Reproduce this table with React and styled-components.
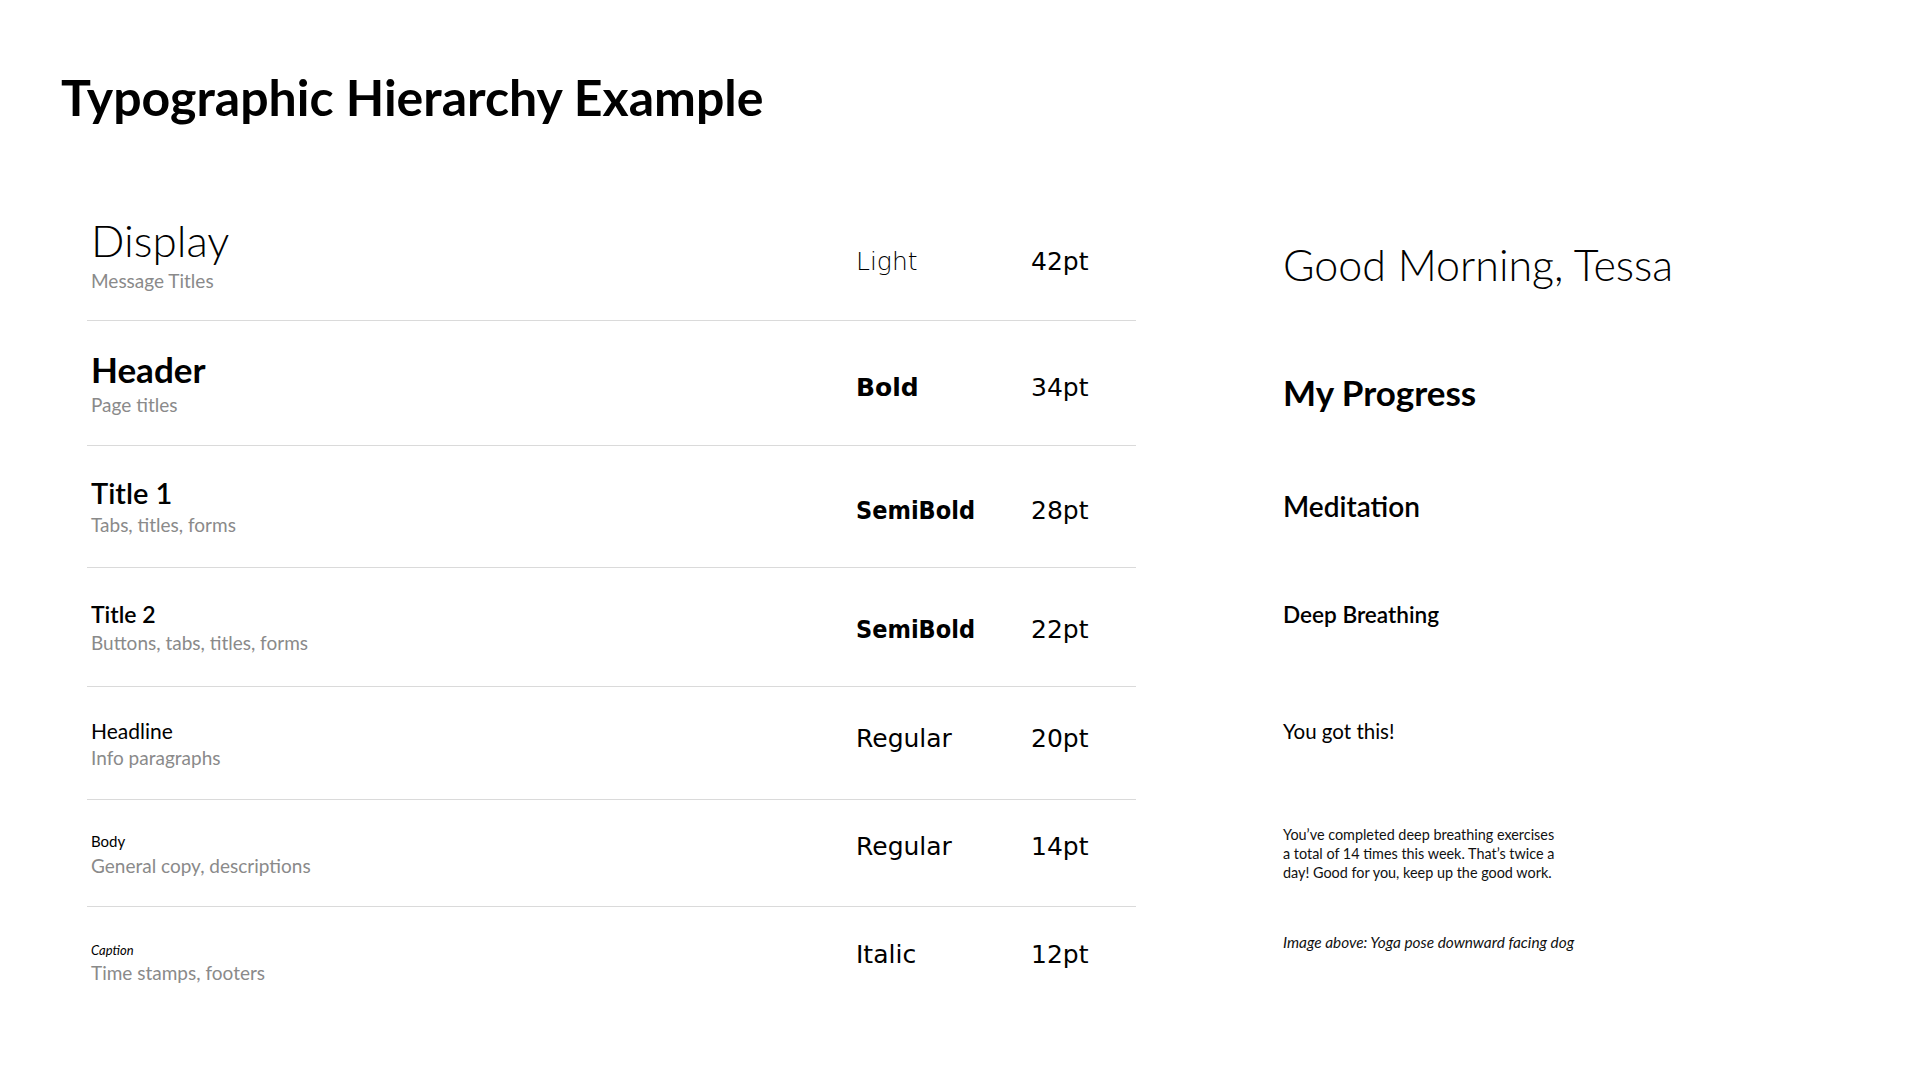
import React from "react";
import styled, { createGlobalStyle } from "styled-components";

// shiftName / shiftSpec: small vertical nudges (px) so each cell sits where the spec sheet puts it
const styles = [
  { name: "Display", use: "Message Titles", weight: "Light", size: "42pt", height: 121, nameSize: 44, nameWeight: 300, shiftName: -6, shiftSpec: 1 },
  { name: "Header", use: "Page titles", weight: "Bold", size: "34pt", height: 125, nameSize: 35, nameWeight: 700, shiftName: 0, shiftSpec: 4 },
  { name: "Title 1", use: "Tabs, titles, forms", weight: "SemiBold", size: "28pt", height: 122, nameSize: 29, nameWeight: 600, shiftName: 0, shiftSpec: 4 },
  { name: "Title 2", use: "Buttons, tabs, titles, forms", weight: "SemiBold", size: "22pt", height: 119, nameSize: 23, nameWeight: 600, shiftName: 1, shiftSpec: 2 },
  { name: "Headline", use: "Info paragraphs", weight: "Regular", size: "20pt", height: 113, nameSize: 21, nameWeight: 400, shiftName: 1, shiftSpec: -5 },
  { name: "Body", use: "General copy, descriptions", weight: "Regular", size: "14pt", height: 107, nameSize: 15, nameWeight: 400, shiftName: 2, shiftSpec: -7 },
  { name: "Caption", use: "Time stamps, footers", weight: "Italic", size: "12pt", height: 107, nameSize: 13, nameWeight: 400, italic: true, shiftName: 3, shiftSpec: -6 },
];

const weightMap = { Light: 200, Bold: 700, SemiBold: 700, Regular: 400, Italic: 400 };

const App = () => {
  return (
    <Page>
      <GlobalStyle />
      <PageTitle>Typographic Hierarchy Example</PageTitle>
      <Content>
        <Table>
          {styles.map((s, i) => (
            <Row key={s.name} $height={s.height} $last={i === styles.length - 1}>
              <NameCell $shift={s.shiftName}>
                <StyleName $size={s.nameSize} $weight={s.nameWeight} $italic={s.italic}>
                  {s.name}
                </StyleName>
                <StyleUse>{s.use}</StyleUse>
              </NameCell>
              <Weight
                $weight={weightMap[s.weight]}
                $narrow={s.weight === "SemiBold"}
                $shift={s.shiftSpec}
              >
                {s.weight}
              </Weight>
              <Size $shift={s.shiftSpec}>{s.size}</Size>
            </Row>
          ))}
        </Table>
        <Samples>
          <Slot $height={128}>
            <Greeting>Good Morning, Tessa</Greeting>
          </Slot>
          <Slot $height={128}>
            <PageHeader>My Progress</PageHeader>
          </Slot>
          <Slot $height={100}>
            <SectionTitle>Meditation</SectionTitle>
          </Slot>
          <Slot $height={116}>
            <ItemTitle>Deep Breathing</ItemTitle>
          </Slot>
          <Slot $height={118}>
            <Headline>You got this!</Headline>
          </Slot>
          <Slot $height={126}>
            <Paragraph>
              You’ve completed deep breathing exercises
              <br />
              a total of 14 times this week. That’s twice a
              <br />
              day! Good for you, keep up the good work.
            </Paragraph>
          </Slot>
          <Slot $height={52}>
            <Caption>Image above: Yoga pose downward facing dog</Caption>
          </Slot>
        </Samples>
      </Content>
    </Page>
  );
};

export default App;

const GlobalStyle = createGlobalStyle`
  html, body {
    margin: 0;
    padding: 0;
    background: #ffffff;
  }
  body {
    font-family: Lato, "Open Sans", sans-serif;
    color: #000000;
  }
`;

const Page = styled.div`
  width: 1920px;
  height: 1080px;
  box-sizing: border-box;
  padding: 63px 0 0 61px;
  background: #ffffff;
`;

const PageTitle = styled.h1`
  margin: 0;
  font-family: Lato, sans-serif;
  font-size: 50px;
  font-weight: 700;
  line-height: 68px;
  color: #000000;
`;

const Content = styled.div`
  display: flex;
  align-items: flex-start;
  gap: 147px;
  margin-top: 69px;
  padding-left: 26px;
`;

const Table = styled.div`
  width: 1049px;
  display: flex;
  flex-direction: column;
`;

const Row = styled.div`
  height: ${(p) => p.$height}px;
  box-sizing: border-box;
  display: grid;
  grid-template-columns: 765px 175px 1fr;
  align-items: center;
  padding-left: 4px;
  border-bottom: ${(p) => (p.$last ? "none" : "1px solid #dadada")};
`;

const NameCell = styled.div`
  display: flex;
  flex-direction: column;
  gap: 5px;
  margin-top: ${(p) => p.$shift * 2}px;
`;

const StyleName = styled.div`
  font-size: ${(p) => p.$size}px;
  font-weight: ${(p) => p.$weight};
  font-style: ${(p) => (p.$italic ? "italic" : "normal")};
  line-height: 1.1;
  color: #000000;
`;

const StyleUse = styled.div`
  font-size: 19px;
  line-height: 22px;
  color: #8a8a8a;
`;

const Weight = styled.div`
  font-family: "DejaVu Sans", sans-serif;
  font-size: 25px;
  font-weight: ${(p) => p.$weight};
  font-stretch: ${(p) => (p.$narrow ? "semi-condensed" : "normal")};
  color: #000000;
  margin-top: ${(p) => p.$shift * 2}px;
`;

const Size = styled.div`
  font-family: "DejaVu Sans", sans-serif;
  font-size: 25px;
  color: #000000;
  margin-top: ${(p) => p.$shift * 2}px;
`;

const Samples = styled.div`
  display: flex;
  flex-direction: column;
`;

const Slot = styled.div`
  height: ${(p) => p.$height}px;
  display: flex;
  align-items: center;
`;

const Greeting = styled.div`
  font-size: 43px;
  font-weight: 300;
`;

const PageHeader = styled.div`
  font-size: 35px;
  font-weight: 700;
`;

const SectionTitle = styled.div`
  font-size: 28px;
  font-weight: 600;
`;

const ItemTitle = styled.div`
  font-size: 22.6px;
  font-weight: 600;
`;

const Headline = styled.div`
  font-size: 20.5px;
  font-weight: 400;
`;

const Paragraph = styled.p`
  margin: 0;
  font-size: 14.4px;
  line-height: 19px;
  color: #111111;
`;

const Caption = styled.div`
  font-size: 15.4px;
  font-style: italic;
  color: #111111;
`;
